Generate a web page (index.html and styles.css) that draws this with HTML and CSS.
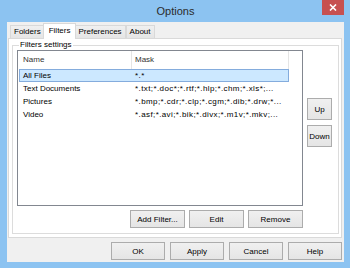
FILE: index.html
```html
<!DOCTYPE html>
<html>
  <head>
    <meta charset="UTF-8"/>
    <title>Options</title>
    <link rel="stylesheet" href="styles.css">
  </head>
  <body>
    <div class="window">
      <div class="titlebar">
        <span></span>
        <span class="title">Options</span>
        <span class="close">
          <svg width="8" height="7" viewBox="0 0 8 7">
            <path d="M1 0.5 L7 6.5 M7 0.5 L1 6.5" stroke="#fff" stroke-width="1.6"/>
          </svg>
        </span>
      </div>

      <div class="client">
        <div class="tabs">
          <div class="tab">Folders</div>
          <div class="tab selected">Filters</div>
          <div class="tab">Preferences</div>
          <div class="tab">About</div>
        </div>

        <div class="panel">
          <fieldset class="group">
            <legend>Filters settings</legend>
            <div class="group-body">
              <div class="list">
                <div class="list-head">
                  <div class="head-name">Name</div>
                  <div class="head-mask">Mask</div>
                </div>
                <div class="row selected">
                  <div class="cell-name">All Files</div>
                  <div class="cell-mask">*.*</div>
                </div>
                <div class="row">
                  <div class="cell-name">Text Documents</div>
                  <div class="cell-mask">*.txt;*.doc*;*.rtf;*.hlp;*.chm;*.xls*;...</div>
                </div>
                <div class="row">
                  <div class="cell-name">Pictures</div>
                  <div class="cell-mask">*.bmp;*.cdr;*.clp;*.cgm;*.dib;*.drw;*...</div>
                </div>
                <div class="row">
                  <div class="cell-name">Video</div>
                  <div class="cell-mask">*.asf;*.avi;*.bik;*.divx;*.m1v;*.mkv;...</div>
                </div>
              </div>

              <div class="side-buttons">
                <button class="btn btn-up">Up</button>
                <button class="btn btn-down">Down</button>
              </div>

              <div class="list-buttons">
                <button class="btn">Add Filter...</button>
                <button class="btn">Edit</button>
                <button class="btn">Remove</button>
              </div>
            </div>
          </fieldset>
        </div>

        <div class="dialog-buttons">
          <button class="btn">OK</button>
          <button class="btn">Apply</button>
          <button class="btn">Cancel</button>
          <button class="btn">Help</button>
        </div>
      </div>
    </div>
  </body>
</html>
```

FILE: styles.css
```css
*{
  font-family: "Liberation Sans", Arial, sans-serif;
  font-size: 8px;
  margin: 0px;
  padding: 0px;
  box-sizing: border-box;
}

body{
  background-color: #8cc3f1;
}

.window{
  width: 350px;
  height: 268px;
  display: flex;
  flex-direction: column;
  background-color: #8cc3f1;
  padding: 0px 6px 6px 7px;
}

/* title bar */
.titlebar{
  height: 22px;
  display: grid;
  grid-template-columns: 1fr auto 1fr;
  align-items: start;
}

.titlebar .title{
  font-size: 11px;
  line-height: 22px;
  color: #2b2b2b;
}

.titlebar .close{
  justify-self: end;
  width: 22px;
  height: 15px;
  background-color: #c75050;
  display: flex;
  align-items: center;
  justify-content: center;
}

/* client area */
.client{
  flex: 1;
  display: flex;
  flex-direction: column;
  background-color: #f0f0f0;
  padding: 1px 2px 0px 1px;
}

.tabs{
  height: 15px;
  display: flex;
  align-items: flex-end;
  padding-left: 2px;
}

.tab{
  height: 13px;
  line-height: 12px;
  padding: 0px 3px;
  color: #000;
  border: 1px solid #d9d9d9;
  border-bottom: 0px;
  background: linear-gradient(#f0f0f0, #e5e5e5);
}

.tab.selected{
  position: relative;
  z-index: 1;
  height: 16px;
  margin: 0px -2px -1px -2px;
  padding: 0px 5px;
  line-height: 13px;
  background: #fff;
}

.panel{
  flex: 1;
  background-color: #fff;
  border: 1px solid #d9d9d9;
}

/* group box */
.group{
  margin: 1px 2px 0px 3px;
  border: 1px solid #dcdcdc;
  padding: 0px 0px 5px 4px;
}

.group legend{
  margin-left: 2px;
  padding: 0px 1px;
  line-height: 10px;
  color: #000;
}

.group-body{
  display: grid;
  grid-template-columns: 286px 25px;
  grid-template-rows: 156px 18px;
  column-gap: 4px;
  row-gap: 4px;
}

/* list view */
.list{
  border: 1px solid #828790;
  background-color: #fff;
}

.list-head{
  height: 18px;
  display: grid;
  grid-template-columns: 114px 157px;
  color: #333;
}

.list-head div{
  line-height: 18px;
  border-right: 1px solid #e5e5e5;
}

.head-name{
  padding-left: 5px;
}

.head-mask{
  padding-left: 3px;
}

.row{
  width: 270px;
  height: 13px;
  margin-left: 1px;
  display: grid;
  grid-template-columns: 113px 155px;
  border: 1px solid transparent;
  color: #000;
}

.row div{
  line-height: 11px;
  white-space: nowrap;
  overflow: hidden;
}

.row.selected{
  background-color: #cce8ff;
  border-color: #84acdd;
}

.cell-name{
  padding-left: 3px;
}

.cell-mask{
  padding-left: 2px;
  letter-spacing: 0.4px;
}

/* buttons */
.btn{
  border: 1px solid #acacac;
  background: linear-gradient(#f0f0f0, #e5e5e5);
  color: #000;
  text-align: center;
}

.side-buttons{
  display: flex;
  flex-direction: column;
  gap: 5px;
  padding-top: 48px;
}

.side-buttons .btn{
  height: 22px;
}

.list-buttons{
  display: flex;
  justify-content: flex-end;
  gap: 4px;
}

.list-buttons .btn{
  width: 55px;
  height: 18px;
}

.dialog-buttons{
  display: flex;
  justify-content: flex-end;
  gap: 5px;
  margin: 4px 0px 2px 0px;
}

.dialog-buttons .btn{
  width: 54px;
  height: 18px;
}
```
